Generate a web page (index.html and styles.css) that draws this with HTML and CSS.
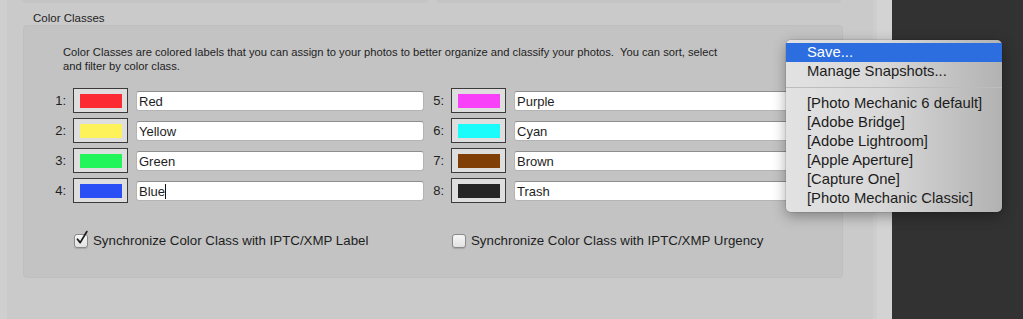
FILE: index.html
```html
<!DOCTYPE html>
<html lang="en">
<head>
  <meta charset="UTF-8" />
  <title>Color Classes</title>
  <link rel="stylesheet" href="styles.css">
</head>
<body>
  <div class="window">
    <div class="edge-left"></div>

    <div class="pane">
      <div class="stubs">
        <div class="stub stub-a"></div>
        <div class="stub stub-b"></div>
      </div>

      <div class="group-title">Color Classes</div>

      <div class="group">
        <p class="hint">Color Classes are colored labels that you can assign to your photos to better organize and classify your photos.&nbsp; You can sort, select and filter by color class.</p>

        <div class="classes">
          <div class="class-col">
            <div class="class-row">
              <span class="num">1:</span>
              <span class="swatch"><span class="chip chip-red"></span></span>
              <div class="name">Red</div>
            </div>
            <div class="class-row">
              <span class="num">2:</span>
              <span class="swatch"><span class="chip chip-yellow"></span></span>
              <div class="name">Yellow</div>
            </div>
            <div class="class-row">
              <span class="num">3:</span>
              <span class="swatch"><span class="chip chip-green"></span></span>
              <div class="name">Green</div>
            </div>
            <div class="class-row">
              <span class="num">4:</span>
              <span class="swatch"><span class="chip chip-blue"></span></span>
              <div class="name">Blue<span class="caret"></span></div>
            </div>
          </div>

          <div class="class-col">
            <div class="class-row">
              <span class="num">5:</span>
              <span class="swatch"><span class="chip chip-purple"></span></span>
              <div class="name">Purple</div>
            </div>
            <div class="class-row">
              <span class="num">6:</span>
              <span class="swatch"><span class="chip chip-cyan"></span></span>
              <div class="name">Cyan</div>
            </div>
            <div class="class-row">
              <span class="num">7:</span>
              <span class="swatch"><span class="chip chip-brown"></span></span>
              <div class="name">Brown</div>
            </div>
            <div class="class-row">
              <span class="num">8:</span>
              <span class="swatch"><span class="chip chip-trash"></span></span>
              <div class="name">Trash</div>
            </div>
          </div>
        </div>

        <div class="sync">
          <label class="check">
            <span class="box">
              <svg width="16" height="17" viewBox="0 0 16 17"><path d="M3.5 9.2 L6.2 12.6 L12.8 1.6" fill="none" stroke="#1c1c1c" stroke-width="1.8" stroke-linecap="round" stroke-linejoin="round"/></svg>
            </span>
            Synchronize Color Class with IPTC/XMP Label
          </label>
          <label class="check">
            <span class="box"></span>
            Synchronize Color Class with IPTC/XMP Urgency
          </label>
        </div>
      </div>
    </div>

    <div class="edge-right"></div>
    <div class="dark"></div>

    <div class="menu">
      <div class="menu-item active">Save...</div>
      <div class="menu-item">Manage Snapshots...</div>
      <div class="menu-sep"></div>
      <div class="menu-item">[Photo Mechanic 6 default]</div>
      <div class="menu-item">[Adobe Bridge]</div>
      <div class="menu-item">[Adobe Lightroom]</div>
      <div class="menu-item">[Apple Aperture]</div>
      <div class="menu-item">[Capture One]</div>
      <div class="menu-item">[Photo Mechanic Classic]</div>
    </div>
  </div>
</body>
</html>
```

FILE: styles.css
```css
body {
  margin: 0;
  font-family: "Liberation Sans", Arial, sans-serif;
  color: #1e1e1e;
  background: #cacaca;
}
.window {
  position: relative;
  display: flex;
  height: 319px;
  overflow: hidden;
}
.edge-left {
  width: 7px;
  background: #cfcfcf;
}
.pane {
  width: 866px;
  background: #cacaca;
}
.edge-right {
  width: 15px;
  background: #d3d3d3;
  border-left: 4px solid #cecece;
}
.dark {
  flex: 1;
  background: #323232;
}

.stubs {
  display: flex;
  gap: 9px;
  padding-left: 15px;
}
.stub {
  height: 3px;
  background: #c4c4c4;
  border-radius: 0 0 4px 4px;
}
.stub-a {
  width: 406px;
}
.stub-b {
  width: 404px;
}
.group-title {
  margin: 8px 0 0 26px;
  font-size: 11.5px;
  line-height: 14px;
}
.group {
  box-sizing: border-box;
  margin-left: 16px;
  width: 820px;
  height: 253px;
  padding: 19px 0 0 26px;
  background: #c3c3c3;
  border: 1px solid #bfbfbf;
  border-radius: 4px;
}
.hint {
  margin: 0 0 15px 13px;
  width: 665px;
  font-size: 11.2px;
  line-height: 14px;
}

.classes {
  display: flex;
  gap: 4px;
}
.class-col {
  display: flex;
  flex-direction: column;
  gap: 5px;
}
.class-row {
  display: flex;
  align-items: center;
  height: 25px;
  font-size: 13px;
}
.num {
  width: 16px;
  margin-right: 7px;
  text-align: right;
}
.swatch {
  box-sizing: border-box;
  width: 55px;
  height: 25px;
  padding: 5px 5px 4px 6px;
  margin-right: 8px;
  background: #dedede;
  border: 1px solid #3a3a3a;
}
.chip {
  display: block;
  height: 100%;
}
.chip-red { background: #fc2a32; }
.chip-yellow { background: #fdf25a; }
.chip-green { background: #22f55a; }
.chip-blue { background: #2a4ff5; }
.chip-purple { background: #f840f8; }
.chip-cyan { background: #1afcfc; }
.chip-brown { background: #7f3f06; }
.chip-trash { background: #252525; }
.name {
  box-sizing: border-box;
  width: 288px;
  height: 20px;
  margin-top: 1px;
  padding: 0 2px;
  line-height: 19px;
  background: #fff;
  border: 1px solid #b4b4b4;
  border-top-color: #8e8e8e;
  border-radius: 3px;
}
.caret {
  display: inline-block;
  width: 1px;
  height: 15px;
  vertical-align: -3px;
  background: #111;
}

.sync {
  display: flex;
  gap: 4px;
  margin-top: 30px;
}
.check {
  display: flex;
  align-items: center;
  width: 374px;
  padding-left: 24px;
  box-sizing: border-box;
  font-size: 13.3px;
  line-height: 16px;
}
.box {
  position: relative;
  box-sizing: border-box;
  width: 14px;
  height: 14px;
  margin-right: 5px;
  background: linear-gradient(#f6f6f6, #e2e2e2);
  border: 1px solid #8a8a8a;
  border-radius: 3px;
  box-shadow: 0 1px 1px rgba(0,0,0,0.15);
}
.box svg {
  position: absolute;
  left: -1px;
  top: -5px;
}

.menu {
  position: absolute;
  left: 786px;
  top: 40px;
  width: 216px;
  height: 172px;
  box-sizing: border-box;
  padding: 3px 0 4px;
  background: linear-gradient(to right, #e2e2e2 0%, #d8d8d8 45%, #b2b2b2 100%);
  border-radius: 5px;
  box-shadow: 0 4px 14px rgba(0,0,0,0.35), 0 0 0 1px rgba(0,0,0,0.08);
  font-size: 14.8px;
}
.menu-item {
  height: 19px;
  line-height: 19px;
  padding-left: 21px;
  color: #1c1c1c;
}
.menu-item.active {
  background: #2c6de0;
  color: #fff;
}
.menu-sep {
  height: 1px;
  margin: 6px 0;
  background: #bdbdbd;
}
```
